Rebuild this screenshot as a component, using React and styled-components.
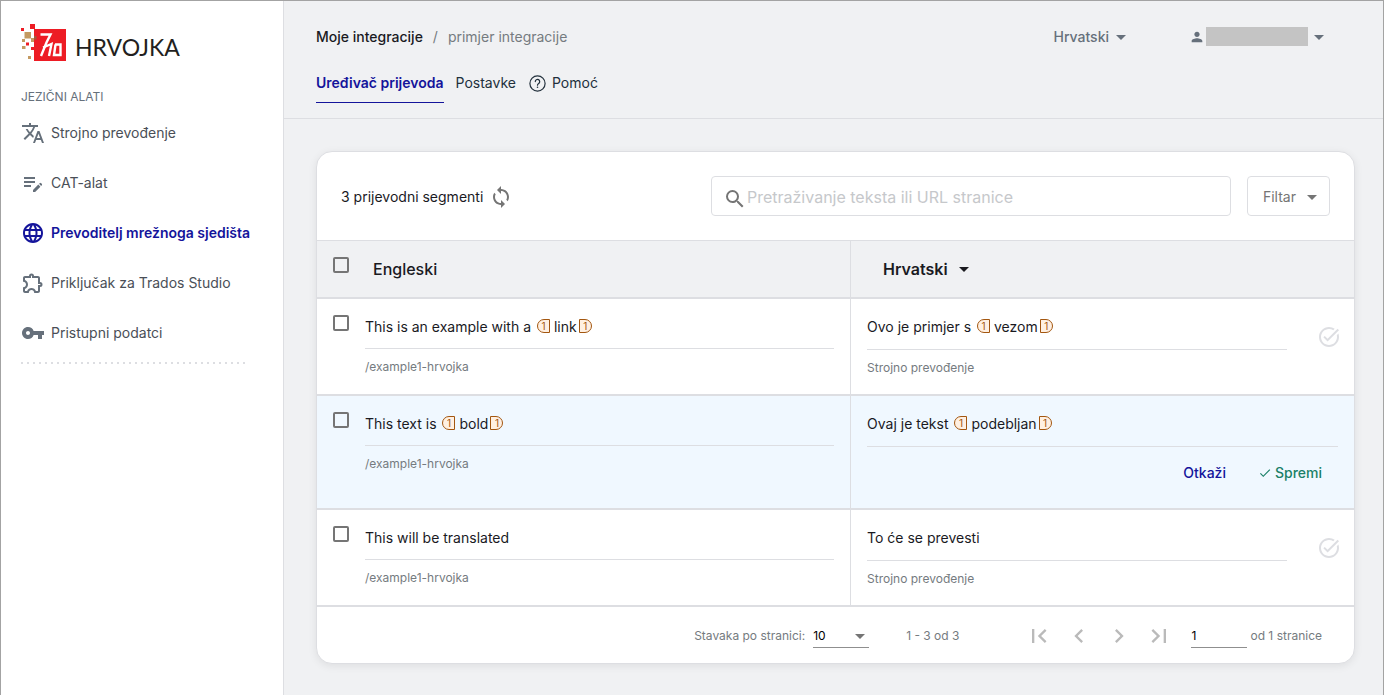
import React, { useState } from "react";
import styled, { createGlobalStyle } from "styled-components";
import {
  MdTranslate,
  MdEditNote,
  MdLanguage,
  MdOutlineExtension,
  MdVpnKey,
  MdSync,
  MdSearch,
  MdTaskAlt,
  MdArrowDropDown,
  MdFirstPage,
  MdLastPage,
  MdChevronLeft,
  MdChevronRight,
  MdPerson,
  MdCheck,
} from "react-icons/md";

const color = {
  page: "#f0f1f3",
  line: "#dddee2",
  ink: "#1a1a1f",
  navy: "#14149b",
  slate: "#66707b",
  muted: "#757b80",
  tag: "#a3560f",
};

const GlobalStyle = createGlobalStyle`
  *, *::before, *::after { box-sizing: border-box; }
  body {
    margin: 0;
    background: ${color.page};
    color: ${color.ink};
    font: 400 14px/20px Inter, "Liberation Sans", sans-serif;
  }
  button, input, select { font: inherit; color: inherit; }
  button { background: none; border: 0; padding: 0; cursor: pointer; }
  a { color: inherit; text-decoration: none; }
  svg { display: block; flex: none; }
`;

const Page = styled.div`
  display: flex;
  min-height: 100vh;
  border: 1px solid #a3a3a3;
`;

const Sidebar = styled.aside`
  flex: none;
  width: 283px;
  padding: 22px 34px 0 20px;
  background: #fff;
  border-right: 1px solid ${color.line};
`;

const Brand = styled.a`
  display: flex;
  align-items: center;
  gap: 8px;
  height: 40px;
`;

const BrandName = styled.span`
  padding-top: 8px;
  font: 400 23px/28px Lato, sans-serif;
  color: #231f20;
`;

const SectionLabel = styled.h2`
  margin: 24px 0 14px;
  font-size: 12px;
  font-weight: 400;
  line-height: 20px;
  color: ${color.slate};
`;

const NavList = styled.ul`
  display: flex;
  flex-direction: column;
  gap: 26px;
  margin: 0;
  padding: 0 0 17px;
  list-style: none;
`;

const NavLink = styled.a`
  display: flex;
  align-items: center;
  gap: 6px;
  height: 24px;
  white-space: nowrap;
  font-weight: ${(p) => (p.$active ? 600 : 400)};
  color: ${(p) => (p.$active ? color.navy : "#4a4f57")};

  svg {
    color: ${(p) => (p.$active ? color.navy : color.slate)};
  }
`;

const DottedRule = styled.div`
  height: 2px;
  background: repeating-linear-gradient(90deg, ${color.line} 0 2px, transparent 2px 6px);
`;

const Main = styled.div`
  flex: 1;
  min-width: 0;
`;

const Header = styled.header`
  padding: 20px 52px 15px 32px;
  border-bottom: 1px solid ${color.line};
`;

const HeaderTop = styled.div`
  display: flex;
  align-items: center;
  justify-content: space-between;
  height: 32px;
`;

const Breadcrumb = styled.nav`
  display: flex;
  gap: 10px;
  color: ${color.muted};

  a {
    font-weight: 500;
    color: ${color.ink};
  }
`;

const Account = styled.div`
  display: flex;
  align-items: center;
  gap: 56px;
  color: ${color.slate};
`;

const MenuButton = styled.button`
  display: flex;
  align-items: center;
  font-weight: 500;
`;

const UserName = styled.span`
  width: 102px;
  height: 19px;
  margin: 0 0 2px 1px;
  background: #c4c4c4;

  & + svg {
    margin-left: -1px;
  }
`;

const Tabs = styled.nav`
  display: flex;
  gap: 12px;
  margin-top: 20px;
`;

const Tab = styled.a`
  display: flex;
  align-items: center;
  gap: 5px;
  padding-bottom: 9px;
  border-bottom: 1px solid ${(p) => (p.$active ? color.navy : "transparent")};
  font-weight: ${(p) => (p.$active ? 600 : 400)};
  color: ${(p) => (p.$active ? color.navy : "#22303c")};
`;

const Content = styled.main`
  padding: 32px 28px 31px 32px;
`;

const Card = styled.section`
  overflow: hidden;
  background: #fff;
  border: 1px solid ${color.line};
  border-radius: 16px;
  box-shadow: 0 2px 8px rgba(0, 0, 0, 0.08);
`;

const Toolbar = styled.div`
  display: flex;
  align-items: center;
  gap: 16px;
  height: 89px;
  padding: 0 24px;
  border-bottom: 1px solid ${color.line};
`;

const SegmentCount = styled.div`
  display: flex;
  align-items: center;
  gap: 6px;
  margin-right: auto;
  padding-top: 2px;

  button {
    color: #757575;
  }
`;

const SearchBox = styled.label`
  display: flex;
  align-items: center;
  flex: 0 1 520px;
  height: 40px;
  padding: 2px 11px 0;
  border: 1px solid ${color.line};
  border-radius: 4px;

  svg {
    margin-top: 4px;
    color: #757575;
  }

  input {
    flex: 1;
    min-width: 0;
    padding: 0;
    border: 0;
    outline: 0;
    background: none;
    font-size: 16px;
  }

  input::placeholder {
    color: #c6c8cb;
    opacity: 1;
  }
`;

const FilterButton = styled.button`
  display: flex;
  align-items: center;
  gap: 4px;
  height: 40px;
  padding: 2px 5px 0 15px;
  border: 1px solid ${color.line};
  border-radius: 4px;
  color: #757575;
`;

const SegmentTable = styled.table`
  width: 100%;
  table-layout: fixed;
  border-collapse: separate;
  border-spacing: 0;

  th,
  td {
    padding: 0;
    border-bottom: 2px solid ${color.line};
    text-align: left;
    vertical-align: top;
  }

  th:nth-child(2),
  td:nth-child(2) {
    border-right: 1px solid ${color.line};
  }
`;

const SelectColumn = styled.col`
  width: 48px;
`;

const TargetColumn = styled.col`
  width: 48.5%;
`;

const HeadRow = styled.tr`
  background: ${color.page};
`;

const HeadLabel = styled.div`
  display: flex;
  align-items: center;
  height: 56px;
  padding-left: ${(p) => (p.$wide ? 32 : 8)}px;
  font-size: 16px;
  font-weight: ${(p) => (p.$wide ? 600 : 500)};

  button {
    display: flex;
    align-items: center;
    gap: 4px;
  }
`;

const SegmentRow = styled.tr`
  background: ${(p) => (p.$editing ? "#f0f8ff" : "#fff")};
`;

const Checkbox = styled.input.attrs({ type: "checkbox" })`
  display: block;
  appearance: none;
  width: 16px;
  height: 16px;
  margin: 16px;
  border: 2px solid #757575;
  border-radius: 2px;
  cursor: pointer;

  &:checked {
    background: ${color.navy};
    border-color: ${color.navy};
  }
`;

const SourceCell = styled.div`
  padding: 18px 16px 17px 0;
`;

const TargetCell = styled.div`
  display: flex;
  align-items: flex-start;
  gap: 30px;
  padding: 18px ${(p) => (p.$editing ? 16 : 13)}px ${(p) => (p.$editing ? 15 : 16)}px 16px;
`;

const TargetBody = styled.div`
  flex: 1;
  min-width: 0;
`;

const SegmentText = styled.div`
  height: ${(p) => (p.$target ? 33 : 32)}px;
  border-bottom: 1px solid ${color.line};
`;

const Meta = styled.div`
  margin-top: 8px;
  font-size: 12px;
  color: ${color.muted};
`;

const Tag = styled.span`
  display: inline-flex;
  align-items: center;
  justify-content: center;
  width: 13px;
  height: 14px;
  margin: ${(p) => (p.$open ? "0 4px 0 2px" : "0 2px")};
  vertical-align: 2px;
  border: 1px solid ${color.tag};
  border-radius: ${(p) => (p.$open ? "7px 0 0 7px" : "0 7px 7px 0")};
  background: #fff0e2;
  font-size: 10px;
  line-height: 12px;
  color: ${color.tag};
`;

const StatusButton = styled.button`
  margin-top: 8px;
  color: ${color.line};
`;

const EditActions = styled.div`
  display: flex;
  justify-content: flex-end;
  gap: 32px;
  padding: 8px 16px 2px 0;
`;

const TextButton = styled.button`
  display: flex;
  align-items: center;
  gap: 3px;
  height: 36px;
  font-weight: 500;
  color: ${(p) => (p.$confirm ? "#1a8068" : color.navy)};
`;

const Pagination = styled.footer`
  display: flex;
  align-items: center;
  justify-content: flex-end;
  height: 56px;
  padding: 2px 32px 0 0;
  font-size: 12px;
  color: ${color.muted};
`;

const PageSize = styled.label`
  display: flex;
  align-items: center;
  gap: 8px;
`;

const SelectWrap = styled.span`
  position: relative;

  select {
    display: block;
    appearance: none;
    width: 56px;
    height: 24px;
    padding: 0;
    border: 0;
    border-bottom: 1px solid #8f8f8f;
    border-radius: 0;
    background: none;
    color: #000;
  }

  svg {
    position: absolute;
    top: 0;
    right: -3px;
    color: #757575;
    pointer-events: none;
  }
`;

const RangeText = styled.span`
  margin: 0 60px 0 37px;
`;

const PageButton = styled.button`
  display: flex;
  align-items: center;
  justify-content: center;
  width: 40px;
  height: 40px;
  color: #bababa;
`;

const PageJump = styled.label`
  display: flex;
  align-items: center;
  gap: 3px;
  margin-left: 12px;

  input {
    width: 56px;
    height: 24px;
    padding: 0;
    border: 0;
    border-bottom: 1px solid #8f8f8f;
    outline: 0;
    background: none;
    color: #000;
  }
`;

const LogoMark = () => (
  <svg width="46" height="38" viewBox="0 0 46 38" aria-hidden="true">
    <g fill="#ed1c24">
      <rect x="13" y="5" width="32" height="32" />
      <rect x="9" y="0" width="5" height="5" />
      <rect x="0" y="4" width="3" height="3" />
      <rect x="5" y="18.5" width="3" height="3" />
      <rect x="10" y="23" width="3" height="3" />
    </g>
    <g fill="#c49a62">
      <rect x="3.5" y="8" width="6.5" height="6.5" />
      <rect x="1" y="15" width="3" height="3" />
      <rect x="10" y="14" width="3" height="4" />
      <rect x="1" y="22" width="3.5" height="3" />
      <rect x="7" y="32" width="3" height="3" />
    </g>
    <rect x="13" y="12" width="2.5" height="3.5" fill="#a3563a" />
    <g fill="none" stroke="#fff" strokeWidth="2.4">
      <path d="M19.5 10.5H29.5L25.5 18.5L20 32" />
      <path d="M22 23.5L30.5 20L28 32" />
      <path d="M34.5 20.5L33 31H39.5V20.5H34" />
    </g>
  </svg>
);

const HelpIcon = () => (
  <svg width="19" height="19" viewBox="0 0 19 19" fill="none" stroke="#22303c" aria-hidden="true">
    <circle cx="9.5" cy="9.5" r="7.6" strokeWidth="1.2" />
    <path d="M7.3 7.6a2.2 2.2 0 1 1 3.4 1.8c-.8.5-1.2.9-1.2 1.8" strokeWidth="1.2" strokeLinecap="round" />
    <circle cx="9.5" cy="13.3" r=".8" fill="#22303c" stroke="none" />
  </svg>
);

const navItems = [
  { label: "Strojno prevođenje", Icon: MdTranslate },
  { label: "CAT-alat", Icon: MdEditNote },
  { label: "Prevoditelj mrežnoga sjedišta", Icon: MdLanguage, active: true },
  { label: "Priključak za Trados Studio", Icon: MdOutlineExtension },
  { label: "Pristupni podatci", Icon: MdVpnKey },
];

const segments = [
  { id: 1, source: ["This is an example with a ", "link"], target: ["Ovo je primjer s ", "vezom"] },
  { id: 2, source: ["This text is ", "bold"], target: ["Ovaj je tekst ", "podebljan"], editing: true },
  { id: 3, source: ["This will be translated"], target: ["To će se prevesti"] },
];

const TaggedText = ({ parts: [lead, tagged] }) => (
  <>
    {lead}
    {tagged && (
      <>
        <Tag $open>1</Tag>
        {tagged}
        <Tag>1</Tag>
      </>
    )}
  </>
);

const Segment = ({ source, target, editing }) => (
  <SegmentRow $editing={editing}>
    <td>
      <Checkbox aria-label={source.join("")} />
    </td>
    <td>
      <SourceCell>
        <SegmentText>
          <TaggedText parts={source} />
        </SegmentText>
        <Meta>/example1-hrvojka</Meta>
      </SourceCell>
    </td>
    <td>
      <TargetCell $editing={editing}>
        <TargetBody>
          <SegmentText $target>
            <TaggedText parts={target} />
          </SegmentText>
          {editing ? (
            <EditActions>
              <TextButton>Otkaži</TextButton>
              <TextButton $confirm>
                <MdCheck size={14} />
                Spremi
              </TextButton>
            </EditActions>
          ) : (
            <Meta>Strojno prevođenje</Meta>
          )}
        </TargetBody>
        {!editing && (
          <StatusButton aria-label="Potvrdi">
            <MdTaskAlt size={24} />
          </StatusButton>
        )}
      </TargetCell>
    </td>
  </SegmentRow>
);

export default function App() {
  const [query, setQuery] = useState("");

  return (
    <>
      <GlobalStyle />
      <Page>
        <Sidebar>
          <Brand href="#">
            <LogoMark />
            <BrandName>HRVOJKA</BrandName>
          </Brand>
          <SectionLabel>JEZIČNI ALATI</SectionLabel>
          <NavList>
            {navItems.map(({ label, Icon, active }) => (
              <li key={label}>
                <NavLink href="#" $active={active}>
                  <Icon size={24} />
                  {label}
                </NavLink>
              </li>
            ))}
          </NavList>
          <DottedRule />
        </Sidebar>

        <Main>
          <Header>
            <HeaderTop>
              <Breadcrumb>
                <a href="#">Moje integracije</a>
                <span>/</span>
                <span>primjer integracije</span>
              </Breadcrumb>
              <Account>
                <MenuButton>
                  Hrvatski
                  <MdArrowDropDown size={24} />
                </MenuButton>
                <MenuButton aria-label="Korisnik">
                  <MdPerson size={16} />
                  <UserName />
                  <MdArrowDropDown size={24} />
                </MenuButton>
              </Account>
            </HeaderTop>
            <Tabs>
              <Tab href="#" $active>
                Uređivač prijevoda
              </Tab>
              <Tab href="#">Postavke</Tab>
              <Tab href="#">
                <HelpIcon />
                Pomoć
              </Tab>
            </Tabs>
          </Header>

          <Content>
            <Card>
              <Toolbar>
                <SegmentCount>
                  3 prijevodni segmenti
                  <button aria-label="Osvježi">
                    <MdSync size={24} />
                  </button>
                </SegmentCount>
                <SearchBox>
                  <MdSearch size={24} />
                  <input
                    type="text"
                    placeholder="Pretraživanje teksta ili URL stranice"
                    value={query}
                    onChange={(e) => setQuery(e.target.value)}
                  />
                </SearchBox>
                <FilterButton>
                  Filtar
                  <MdArrowDropDown size={24} />
                </FilterButton>
              </Toolbar>

              <SegmentTable>
                <colgroup>
                  <SelectColumn />
                  <col />
                  <TargetColumn />
                </colgroup>
                <thead>
                  <HeadRow>
                    <th>
                      <Checkbox aria-label="Odaberi sve" />
                    </th>
                    <th>
                      <HeadLabel>Engleski</HeadLabel>
                    </th>
                    <th>
                      <HeadLabel $wide>
                        <button>
                          Hrvatski
                          <MdArrowDropDown size={24} />
                        </button>
                      </HeadLabel>
                    </th>
                  </HeadRow>
                </thead>
                <tbody>
                  {segments.map((s) => (
                    <Segment key={s.id} {...s} />
                  ))}
                </tbody>
              </SegmentTable>

              <Pagination>
                <PageSize>
                  Stavaka po stranici:
                  <SelectWrap>
                    <select defaultValue="10">
                      <option>10</option>
                      <option>25</option>
                      <option>50</option>
                    </select>
                    <MdArrowDropDown size={24} />
                  </SelectWrap>
                </PageSize>
                <RangeText>1 - 3 od 3</RangeText>
                <PageButton aria-label="Prva stranica">
                  <MdFirstPage size={28} />
                </PageButton>
                <PageButton aria-label="Prethodna stranica">
                  <MdChevronLeft size={28} />
                </PageButton>
                <PageButton aria-label="Sljedeća stranica">
                  <MdChevronRight size={28} />
                </PageButton>
                <PageButton aria-label="Posljednja stranica">
                  <MdLastPage size={28} />
                </PageButton>
                <PageJump>
                  <input type="text" defaultValue="1" />
                  od 1 stranice
                </PageJump>
              </Pagination>
            </Card>
          </Content>
        </Main>
      </Page>
    </>
  );
}
